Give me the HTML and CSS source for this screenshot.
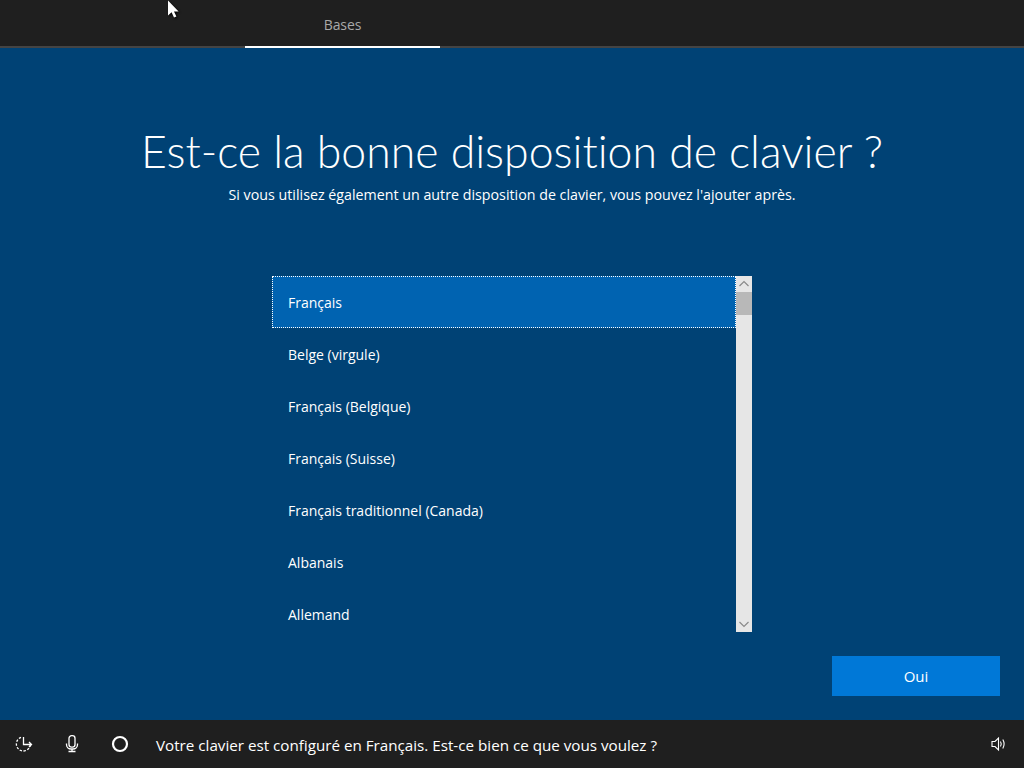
FILE: index.html
```html
<!DOCTYPE html>
<html lang="fr">
<head>
    <meta charset="UTF-8">
    <meta name="viewport" content="width=device-width, initial-scale=1.0">
    <title>Bases</title>
    <link rel="stylesheet" href="styles.css">
</head>
<body>
    <svg class="pointer" width="14" height="20" viewBox="0 0 14 20">
        <path d="M1 0.5V15.5L4.6 12.2L7 17.6L9.4 16.6L7 11.4H11.6Z" fill="#fff"/>
    </svg>
    <header class="top-bar">
        <div class="tab">Bases</div>
    </header>
    <main class="content">
        <h1 class="title">Est-ce la bonne disposition de clavier ?</h1>
        <p class="subtitle">Si vous utilisez également un autre disposition de clavier, vous pouvez l'ajouter après.</p>
        <div class="listbox">
            <ul class="list">
                <li class="item selected">Français</li>
                <li class="item">Belge (virgule)</li>
                <li class="item">Français (Belgique)</li>
                <li class="item">Français (Suisse)</li>
                <li class="item">Français traditionnel (Canada)</li>
                <li class="item">Albanais</li>
                <li class="item">Allemand</li>
            </ul>
            <div class="scrollbar">
                <svg class="arrow" width="16" height="16" viewBox="0 0 16 16">
                    <path d="M3.5 10L8 5.5L12.5 10" fill="none" stroke="#8a8a8a" stroke-width="1.2"/>
                </svg>
                <div class="thumb"></div>
                <div class="track"></div>
                <svg class="arrow" width="16" height="16" viewBox="0 0 16 16">
                    <path d="M3.5 6L8 10.5L12.5 6" fill="none" stroke="#8a8a8a" stroke-width="1.2"/>
                </svg>
            </div>
        </div>
        <div class="actions">
            <button class="yes-btn">Oui</button>
        </div>
    </main>
    <footer class="bottom-bar">
        <svg class="icon" width="18" height="18" viewBox="0 0 18 18">
            <path d="M6 2.4A7 7 0 1 0 15.2 10.5" fill="none" stroke="#fff" stroke-width="1.3" stroke-dasharray="2.4 1.5"/>
            <path d="M8.5 2V9.5H16.5M14 7L16.5 9.5L14 12" fill="none" stroke="#fff" stroke-width="1.3"/>
        </svg>
        <svg class="icon" width="18" height="18" viewBox="0 0 18 18">
            <rect x="6" y="0.7" width="6" height="11.5" rx="2.6" fill="none" stroke="#fff" stroke-width="1.3"/>
            <path d="M3.5 8.5V9.5A4.5 4.5 0 0 0 8 14H10A4.5 4.5 0 0 0 14.5 9.5V8.5M9 14V16.5M5.5 16.5H12.5" fill="none" stroke="#fff" stroke-width="1.3"/>
        </svg>
        <svg class="icon" width="18" height="18" viewBox="0 0 18 18">
            <circle cx="9" cy="9" r="7" fill="none" stroke="#fff" stroke-width="2.2"/>
        </svg>
        <span class="voice-text">Votre clavier est configuré en Français. Est-ce bien ce que vous voulez ?</span>
        <svg class="volume" width="16" height="16" viewBox="0 0 16 16">
            <path d="M1 5.5H4L7.5 2V14L4 10.5H1Z" fill="none" stroke="#fff" stroke-width="1.1"/>
            <path d="M9.5 5.5Q11 8 9.5 10.5M11.8 3.5Q14.4 8 11.8 12.5" fill="none" stroke="#fff" stroke-width="1.1"/>
        </svg>
    </footer>
</body>
</html>
```

FILE: styles.css
```css
html, body {
    height: 100%;
}
body {
    margin: 0;
    display: flex;
    flex-direction: column;
    height: 768px;
    overflow: hidden;
    font-family: "Open Sans", "Noto Sans", sans-serif;
    background-color: #004275;
    color: #fff;
}
.pointer {
    position: absolute;
    top: 0;
    left: 167px;
    filter: drop-shadow(1px 1px 1px #000);
}
.top-bar {
    height: 46px;
    padding-left: 245px;
    display: flex;
    background-color: #1f1f1f;
    border-bottom: 2px solid #444;
}
.tab {
    width: 195px;
    height: 48px;
    box-sizing: border-box;
    padding-top: 15px;
    font-size: 14px;
    letter-spacing: -0.1px;
    line-height: 20px;
    text-align: center;
    color: #a9a9a9;
    border-bottom: 2px solid #fff;
}
.content {
    flex: 1;
    display: flex;
    flex-direction: column;
    align-items: center;
}
.title {
    margin: 71px 0 1px;
    font-family: Lato, "Open Sans", sans-serif;
    font-size: 44.6px;
    font-weight: 300;
    font-variant-ligatures: none;
    line-height: 64px;
    white-space: nowrap;
}
.subtitle {
    margin: 0;
    font-size: 14.25px;
    line-height: 22px;
    white-space: nowrap;
}
.listbox {
    display: flex;
    width: 480px;
    height: 356px;
    margin-top: 70px;
}
.list {
    flex: 1;
    margin: 0;
    padding: 0;
    list-style: none;
    font-size: 14px;
}
.item {
    height: 52px;
    box-sizing: border-box;
    padding: 1px 0 0 16px;
    line-height: 52px;
}
.item.selected {
    background-color: #0063b1;
    outline: 1px dotted #fff;
    outline-offset: -1px;
}
.scrollbar {
    width: 16px;
    display: flex;
    flex-direction: column;
    background-color: #e6e6e6;
}
.arrow {
    display: block;
}
.thumb {
    height: 23px;
    background-color: #b8b8b8;
}
.track {
    flex: 1;
}
.actions {
    align-self: stretch;
    display: flex;
    justify-content: flex-end;
    padding-right: 24px;
    margin-top: 24px;
}
.yes-btn {
    width: 168px;
    height: 40px;
    border: none;
    background-color: #0078d7;
    color: #fff;
    font-family: inherit;
    font-size: 15px;
}
.bottom-bar {
    height: 48px;
    display: flex;
    align-items: center;
    padding: 0 17px 0 15px;
    background-color: #1f1f1f;
    position: relative;
}
.icon {
    margin-right: 30px;
}
.voice-text {
    margin-left: -3px;
    flex: 1;
    font-size: 15.2px;
    line-height: 20px;
    padding-top: 1px;
}
```
